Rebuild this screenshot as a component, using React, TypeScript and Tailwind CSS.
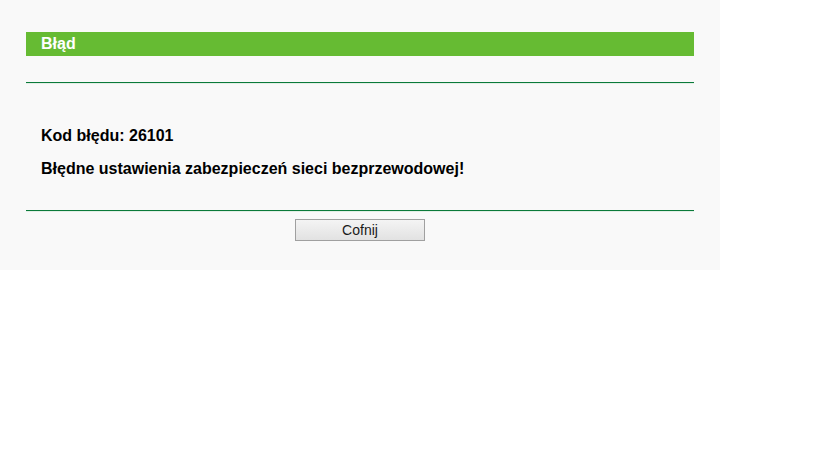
export default function App() {
  return (
    <div className="h-[460px] w-[819px] bg-white font-['Liberation_Sans',Arial,sans-serif]">
      <div className="h-[270px] w-[720px] bg-[#f9f9f9] pl-[26px] pt-[32px]">
        <div className="w-[668px]">
          <div className="h-[24px] bg-[#66bb33] pl-[15px] text-[16px] font-bold leading-[24px] text-white">
            Błąd
          </div>
          <div className="mt-[26px] h-[1px] bg-[#0b7a3a]" />
          <div className="h-[1px] bg-[#e3efe6]" />
          <div className="pl-[15px] pt-[43px] text-[16px] font-bold leading-[18px] text-black">
            <p>Kod błędu: 26101</p>
            <p className="mt-[15px]">Błędne ustawienia zabezpieczeń sieci bezprzewodowej!</p>
          </div>
          <div className="mt-[32px] h-[1px] bg-[#0b7a3a]" />
          <div className="h-[1px] bg-[#e3efe6]" />
          <div className="flex justify-center pt-[7px]">
            <button className="h-[22px] w-[130px] border border-[#a0a0a0] bg-gradient-to-b from-[#f4f4f4] to-[#e2e2e2] text-[14px] leading-[20px] text-[#1a1a1a]">
              Cofnij
            </button>
          </div>
        </div>
      </div>
    </div>
  );
}
